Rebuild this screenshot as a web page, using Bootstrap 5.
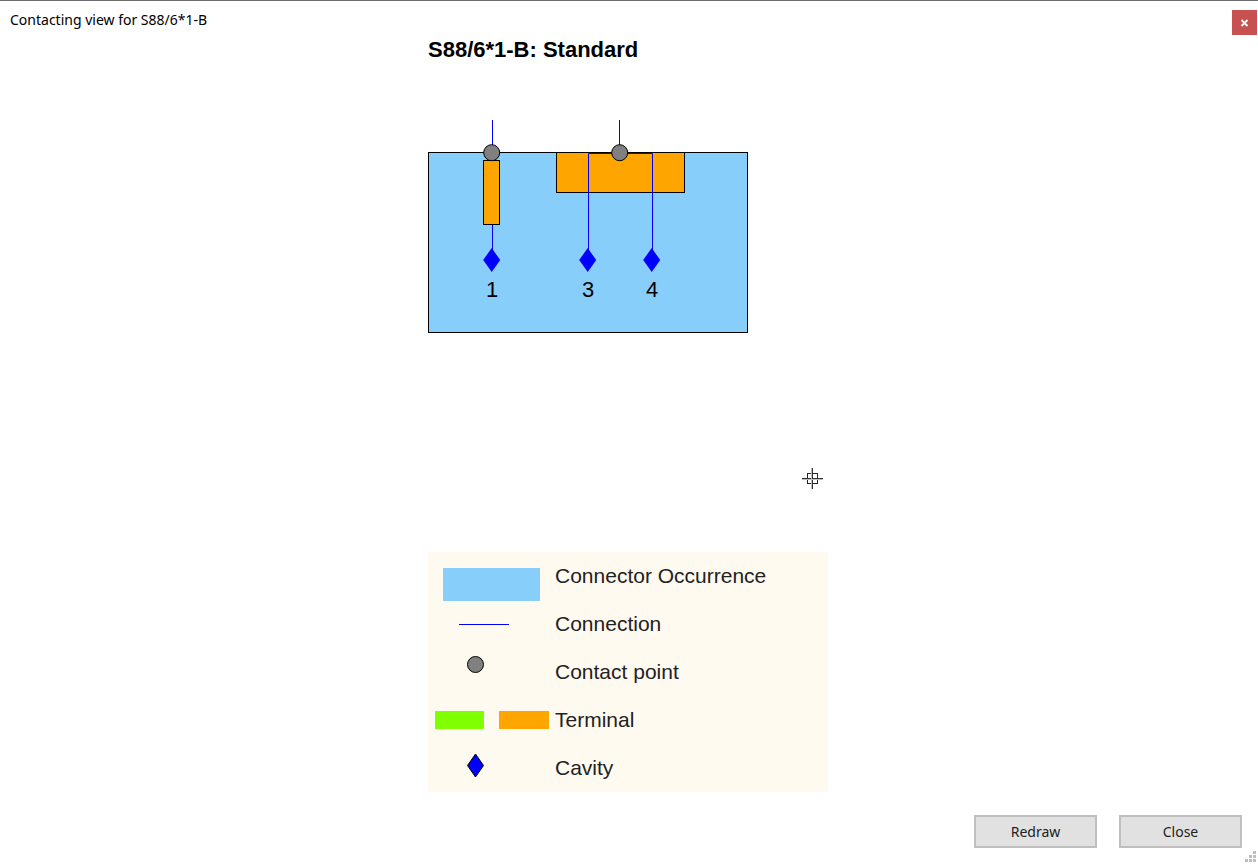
<!DOCTYPE html>
<html lang="en">
<head>
<meta charset="utf-8">
<meta name="viewport" content="width=device-width, initial-scale=1">
<title>Contacting view for S88/6*1-B</title>
<link href="https://cdn.jsdelivr.net/npm/bootstrap@5.3.0/dist/css/bootstrap.min.css" rel="stylesheet">
<style>
  body { background: #fff; color: #000; font-family: "Liberation Sans", sans-serif; }
  .window { border-top: 1px solid #6d6d6d; }
  .title-bar { padding: 9px 1px 0 10px; }
  .caption { font: 14px/20px "Noto Sans", sans-serif; }
  .btn-x { width: 25px; height: 25px; background: #c75050; border-radius: 0; }
  .btn-x:hover { background: #e04343; }
  .content-area { padding: 2px 2px 0 0; }
  .view { width: 400px; }
  .view-title { font-size: 22px; line-height: 26px; margin-bottom: 57px; }
  .view svg, .btn-x svg { display: block; overflow: visible; }
  .pin-label { font-size: 22px; text-anchor: middle; }
  .crosshair { right: 5px; bottom: 63px; }
  .legend { background: #fffaf0; color: #222; font-size: 21px; line-height: 48px; }
  .legend svg { width: 127px; height: 48px; flex: none; }
  .btn-flat { width: 123px; height: 33px; padding: 0; border: 2px solid #bfbfbf; border-radius: 0; background: #e1e1e1; color: #222; font: 14px/20px "Noto Sans", sans-serif; }
  .btn-flat:hover { background: #e5f1fb; border-color: #0078d7; }
  .footer-bar { gap: 22px; padding: 23px 16px 16px; }
  .grip { right: 2px; bottom: 2px; }
</style>
</head>
<body>
<div class="window min-vh-100 d-flex flex-column position-relative">
  <header class="title-bar d-flex justify-content-between align-items-start">
    <h1 class="caption mb-0">Contacting view for S88/6*1-B</h1>
    <button type="button" class="btn btn-x p-0 border-0 d-flex align-items-center justify-content-center" aria-label="Close window">
      <svg width="7" height="6" viewBox="0 0 7 6" stroke="#fff" stroke-width="1.8"><path d="M.5 0L6.500 6M6.500 0L.5 6"/></svg>
    </button>
  </header>

  <main class="content-area flex-grow-1 d-flex justify-content-center">
    <div class="view d-flex flex-column">
      <h2 class="view-title fw-bold">S88/6*1-B: Standard</h2>
      <div class="flex-grow-1 position-relative">
        <svg width="400" height="213" viewBox="0 0 400 213" role="img" aria-label="Connector contacting diagram">
          <rect x=".5" y="32.5" width="319" height="180" fill="#87cefa" stroke="#000"/>
          <rect x="128" y="32.5" width="128" height="40" fill="#ffa500" stroke="#000" shape-rendering="crispEdges"/>
          <g stroke="#0000ff" fill="none">
            <path d="M64.5 0V140"/>
            <path d="M191.5 0V33"/>
            <path d="M160.5 140V33.5H224.5V140"/>
          </g>
          <rect x="55.5" y="40.5" width="16" height="64" fill="#ffa500" stroke="#000"/>
          <g fill="gray" stroke="#000"><circle cx="63.7" cy="32.7" r="8"/><circle cx="191.7" cy="32.7" r="8"/></g>
          <g fill="#00f">
            <path d="M63.7 128L72.2 140L63.7 152L55.2 140Z"/>
            <path d="M159.7 128L168.2 140L159.7 152L151.2 140Z"/>
            <path d="M223.7 128L232.2 140L223.7 152L215.2 140Z"/>
          </g>
          <g class="pin-label"><text x="64" y="177">1</text><text x="160" y="177">3</text><text x="224" y="177">4</text></g>
        </svg>
        <svg class="crosshair position-absolute" width="21" height="21" viewBox="0 0 21 21" fill="none" aria-hidden="true">
          <path d="M5 5.5H16M5 15.5H16M5.5 5V16M15.5 5V16" stroke="#222"/>
          <path d="M10.5 0V21M0 10.5H21" stroke="#333"/>
          <path d="M9.5 0V21M0 11.5H21" stroke="#bbb"/>
        </svg>
      </div>
      <ul class="legend list-unstyled mb-0">
        <li class="d-flex"><svg aria-hidden="true"><rect x="15" y="16" width="97" height="33" fill="#87cefa"/></svg>Connector Occurrence</li>
        <li class="d-flex"><svg aria-hidden="true"><path d="M31 24.5H81" stroke="#00f"/></svg>Connection</li>
        <li class="d-flex"><svg aria-hidden="true"><circle cx="47.5" cy="16.5" r="8" fill="gray" stroke="#000"/></svg>Contact point</li>
        <li class="d-flex"><svg aria-hidden="true"><rect x="7" y="15" width="49" height="18" fill="#7fff00"/><rect x="71" y="15" width="50" height="18" fill="#ffa500"/></svg>Terminal</li>
        <li class="d-flex"><svg aria-hidden="true"><path d="M47.5 10L55.5 21.5L47.5 33L39.5 21.5Z" fill="#00f" stroke="#000"/></svg>Cavity</li>
      </ul>
    </div>
  </main>

  <footer class="footer-bar d-flex justify-content-end">
    <button type="button" class="btn btn-flat">Redraw</button>
    <button type="button" class="btn btn-flat">Close</button>
  </footer>
  <svg class="grip position-absolute" width="11" height="11" viewBox="0 0 11 11" fill="#bfbfbf" aria-hidden="true">
    <path d="M8 0h3v3h-3zM4 4h3v3h-3zM8 4h3v3h-3zM0 8h3v3h-3zM4 8h3v3h-3zM8 8h3v3h-3z"/>
  </svg>
</div>
<script src="https://cdn.jsdelivr.net/npm/bootstrap@5.3.0/dist/js/bootstrap.bundle.min.js"></script>
</body>
</html>
